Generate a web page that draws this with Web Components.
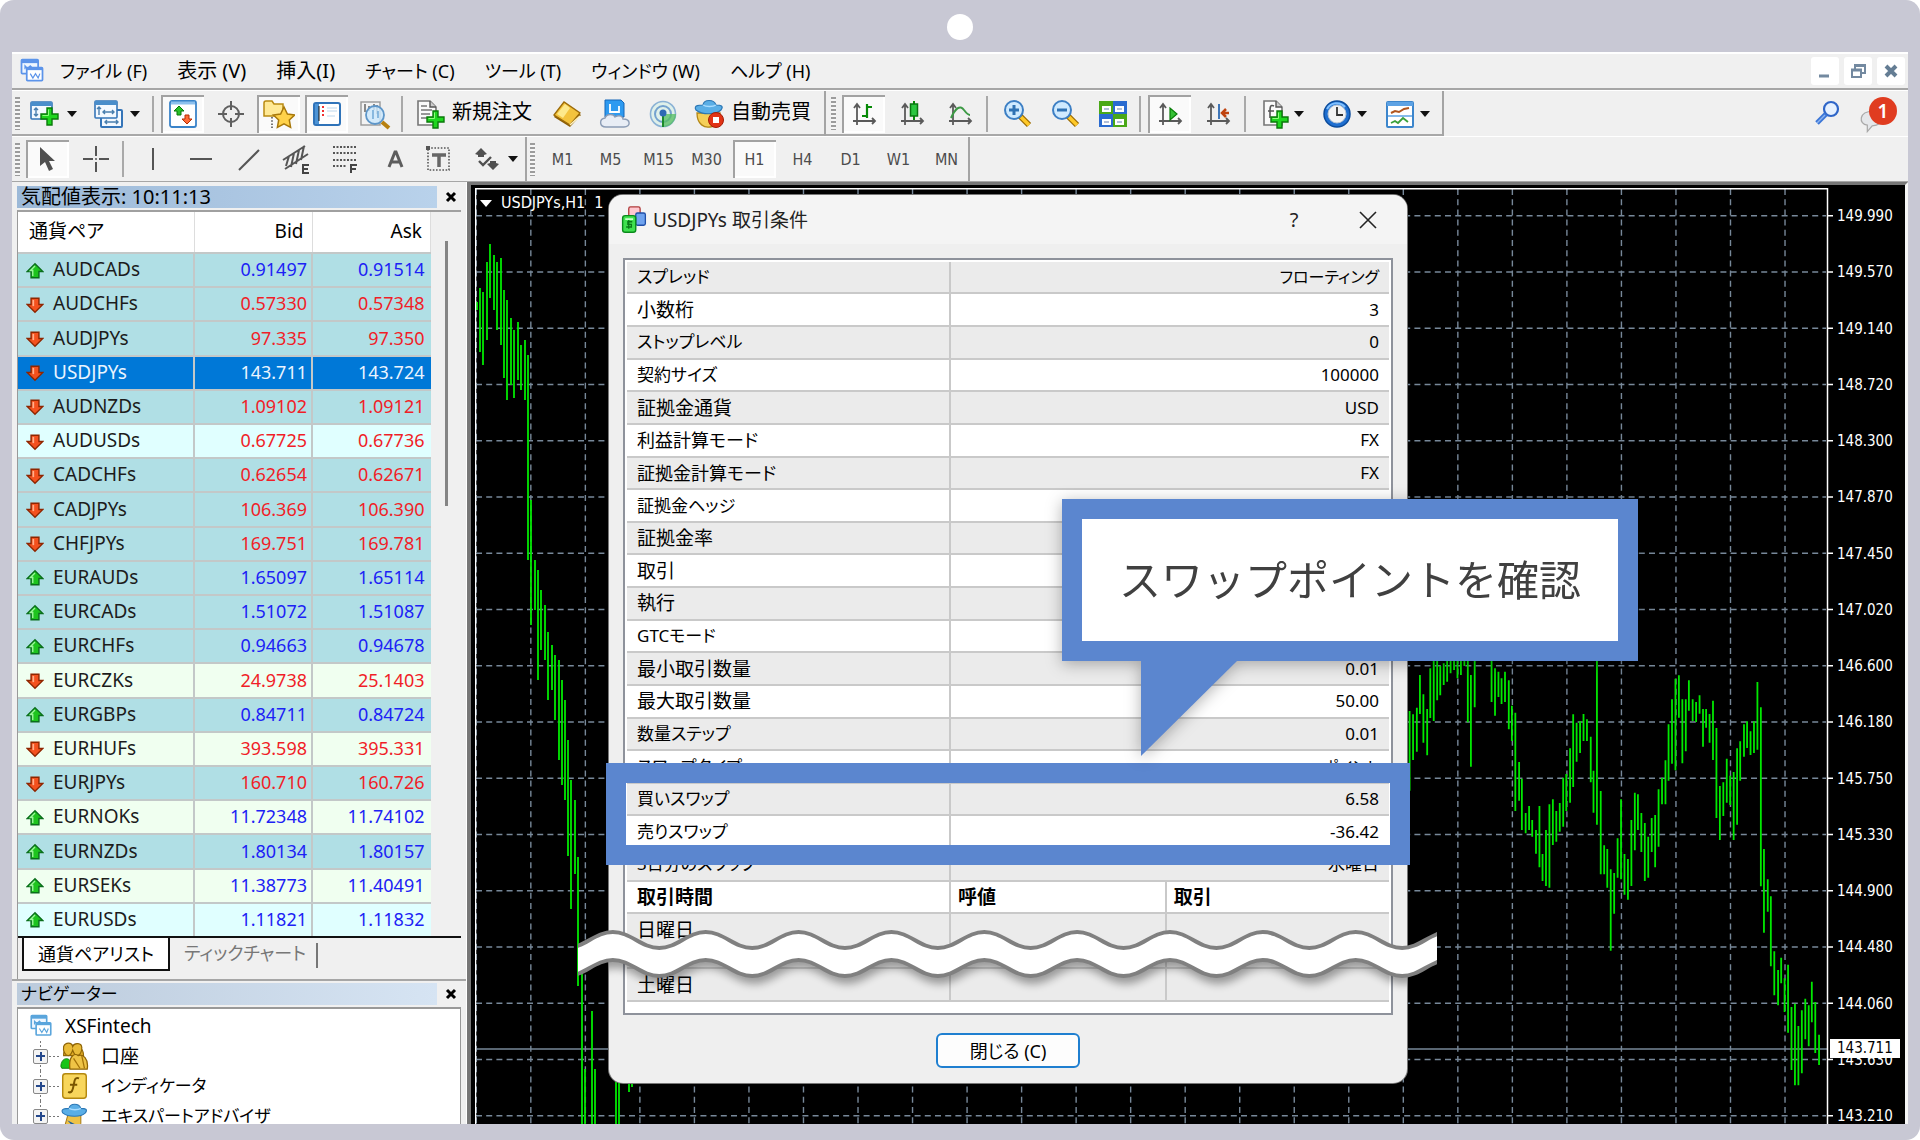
<!DOCTYPE html>
<html lang="ja">
<head>
<meta charset="utf-8">
<title>USDJPYs 取引条件</title>
<style>
  html, body { margin: 0; height: 100%; background: #fff; }
  body { font-family: "Noto Sans", "Noto Sans CJK JP", sans-serif; font-size: 18px; color: #000; font-feature-settings: "palt"; overflow: hidden; }
</style>
</head>
<body>
<terminal-frame>
  <menu-bar slot="menu"></menu-bar>
  <tool-bar slot="bars">
    <tool-group>
      <tool-button icon="newchart" label="新規チャート" split></tool-button>
      <tool-button icon="profiles" label="チャートの組表示" split></tool-button>
      <tool-sep></tool-sep>
      <tool-button icon="watch" label="気配値表示" pressed></tool-button>
      <tool-button icon="target" label="データウィンドウ"></tool-button>
      <tool-button icon="favorites" label="ナビゲーター" pressed></tool-button>
      <tool-button icon="terminal" label="ターミナル" pressed></tool-button>
      <tool-button icon="tester" label="ストラテジーテスター"></tool-button>
      <tool-sep></tool-sep>
      <tool-button icon="order">新規注文</tool-button>
      <tool-button icon="book" label="メタエディター"></tool-button>
      <tool-button icon="cloud" label="クラウド"></tool-button>
      <tool-button icon="signal" label="シグナル"></tool-button>
      <tool-button icon="auto">自動売買</tool-button>
    </tool-group>
    <tool-group inset>
      <tool-button icon="bars" label="バーチャート" pressed></tool-button>
      <tool-button icon="candle" label="ローソク足"></tool-button>
      <tool-button icon="line" label="ラインチャート"></tool-button>
      <tool-sep></tool-sep>
      <tool-button icon="zoomin" label="拡大"></tool-button>
      <tool-button icon="zoomout" label="縮小"></tool-button>
      <tool-button icon="tile" label="整列"></tool-button>
      <tool-sep></tool-sep>
      <tool-button icon="scroll" label="自動スクロール" pressed></tool-button>
      <tool-button icon="shift" label="チャートシフト"></tool-button>
      <tool-sep></tool-sep>
      <tool-button icon="indicator" label="インディケータ" split></tool-button>
      <tool-button icon="clock" label="時間足" split></tool-button>
      <tool-button icon="template" label="定型チャート" split></tool-button>
    </tool-group>
    <alert-tools slot="end"></alert-tools>
  </tool-bar>
  <tool-bar slot="bars" last>
    <tool-group flat>
      <tool-button icon="cursor" label="カーソル" pressed></tool-button>
      <tool-button icon="cross" label="クロスヘア"></tool-button>
      <tool-sep></tool-sep>
      <tool-button icon="vline" label="垂直線"></tool-button>
      <tool-button icon="hline" label="水平線"></tool-button>
      <tool-button icon="trend" label="トレンドライン"></tool-button>
      <tool-button icon="channel" label="チャネル"></tool-button>
      <tool-button icon="fibo" label="フィボナッチ"></tool-button>
      <tool-button icon="texta" label="テキスト"></tool-button>
      <tool-button icon="textt" label="ラベル"></tool-button>
      <tool-button icon="arrows" label="矢印" split></tool-button>
    </tool-group>
    <tool-group flat>
      <tool-button period>M1</tool-button>
      <tool-button period>M5</tool-button>
      <tool-button period>M15</tool-button>
      <tool-button period>M30</tool-button>
      <tool-button period pressed>H1</tool-button>
      <tool-button period>H4</tool-button>
      <tool-button period>D1</tool-button>
      <tool-button period>W1</tool-button>
      <tool-button period>MN</tool-button>
    </tool-group>
  </tool-bar>
  <market-watch slot="side"></market-watch>
  <navigator-panel slot="side"></navigator-panel>
  <price-chart slot="main"></price-chart>
  <terms-dialog slot="over"></terms-dialog>
  <call-out slot="over">スワップポイントを確認</call-out>
</terminal-frame>

<script>
const define = (name, css, html) => {
  const t = document.createElement('template');
  t.innerHTML = `<style>:host,*{box-sizing:border-box}button{font:inherit;color:inherit;background:none;border:0;padding:0;margin:0;font-feature-settings:inherit}svg{display:block}${css}</style>`;
  customElements.define(name, class extends HTMLElement {
    connectedCallback() {
      if (this.shadowRoot) return;
      const root = this.attachShadow({ mode: 'open' });
      root.append(t.content.cloneNode(true));
      const body = document.createElement('template');
      body.innerHTML = typeof html === 'function' ? html(this) : html;
      root.append(body.content);
    }
  });
};

/* ---------- icons, all on a 32 x 32 grid ---------- */
const plus = (x, y) => `<path transform="translate(${x} ${y})" d="M7 1h5v6h6v5h-6v6H7v-6H1V7h6z" fill="#1ed61e" stroke="#0a7a0a" stroke-width="1.4"/><path transform="translate(${x} ${y})" d="M8.5 2.5v6H2.5" fill="none" stroke="#8dff7d"/>`;
const axes = `<path d="M9 7v20M5 23h22M6 10l3-4 3 4M24 20l3 3-3 3" fill="none" stroke="#5a5a5a" stroke-width="1.8"/>`;
const lens = `<path d="M19 18l9 9" stroke="#9a6a00" stroke-width="6"/><path d="M20 19l8 8" stroke="#ffc928" stroke-width="3.5"/><circle cx="13" cy="12" r="9" fill="#cfeaff" stroke="#3d7fc4" stroke-width="2"/>`;
const sheet = `<path d="M4 3h12l6 6v18H4z" fill="#fafafa" stroke="#777" stroke-width="1.6"/><path d="M16 3v6h6" fill="#ccc" stroke="#555" stroke-width="1.4"/>`;
const hat = `<path d="M3 12c-3-5 4-5 7-5 1-6 11-6 13 0 5 0 8 1 5 5-5 5-19 5-25 0z" fill="#5aaee6" stroke="#2b77b5" stroke-width="1.2"/><path d="M10 7c3 2 10 2 13 0" fill="none" stroke="#a8dcff" stroke-width="1.5"/>`;
const windows = c => `<rect x="4" y="3" width="19" height="16" rx="1" fill="#eef6ff" stroke="${c}" stroke-width="2"/><rect x="4" y="3" width="19" height="4" fill="${c}"/><path d="M8 14v-4l3 3 3-3 3 3" fill="none" stroke="${c}" stroke-width="1.4"/><rect x="10" y="12" width="18" height="15" rx="1" fill="#fff" stroke="${c}" stroke-width="2"/><rect x="10" y="12" width="18" height="3" fill="${c}"/><path d="M14 19l3 5 3-5 3 5 2-5" fill="none" stroke="${c}" stroke-width="1.4"/>`;
const ICONS = {
  app: windows('#5c94ea'),
  account: windows('#5aa5dc'),
  newchart: `<rect x="1" y="4" width="21" height="17" rx="1" fill="#f4f9ff" stroke="#3575b8" stroke-width="1.6"/><rect x="1" y="4" width="21" height="4" fill="#4a8ecb"/><path d="M6 10v8M4 12l2-2 2 2M4 16l2 2 2-2" fill="none" stroke="#4a7fae" stroke-width="1.4"/>${plus(10, 9)}`,
  profiles: `<rect x="8" y="12" width="21" height="17" rx="1" fill="#f4f9ff" stroke="#3575b8" stroke-width="2"/><path d="M12 24h13M14 22l-2 2 2 2M23 22l2 2-2 2" fill="none" stroke="#4a7fae" stroke-width="1.4"/><rect x="2" y="3" width="22" height="17" rx="1" fill="#f4f9ff" stroke="#3575b8" stroke-width="1.6"/><rect x="2" y="3" width="22" height="4" fill="#4a8ecb"/><path d="M6 9v8M4 11l2-2 2 2M10 14h11M12 12l-2 2 2 2M19 12l2 2-2 2" fill="none" stroke="#4a7fae" stroke-width="1.4"/>`,
  watch: `<rect x="3" y="3" width="26" height="26" rx="2" fill="#fff" stroke="#3983c9" stroke-width="1.8"/><path d="M4 5h24" stroke="#8cc0ee" stroke-width="3"/><path d="M12 8l5 5h-3v4h-4v-4H7z" fill="#28bf28" stroke="#077807"/><path d="M20 26l-5-5h3v-4h4v4h3z" fill="#ff6a35" stroke="#b62d00"/>`,
  target: `<circle cx="16" cy="16" r="8" fill="none" stroke="#606060" stroke-width="2"/><path d="M16 3v9M16 20v9M3 16h9M20 16h9" stroke="#606060" stroke-width="2"/>`,
  favorites: `<path d="M1 18V5q0-2 2-2h6l2 3h9v12z" fill="#ffe995" stroke="#b98a12" stroke-width="1.5"/><path d="M9 19v11" stroke="#555" stroke-width="1.6" stroke-dasharray="1.6 1.6"/><path d="M21 9l3.4 7 7.2 1-5.300 5 1.300 7.400-6.600-3.600-6.600 3.600 1.300-7.400-5.300-5 7.200-1z" fill="#ffd24a" stroke="#a8780a" stroke-width="1.5"/>`,
  terminal: `<rect x="3" y="5" width="26" height="22" rx="2" fill="#fff" stroke="#2f73b9" stroke-width="2"/><path d="M4 6h4v20H4z" fill="#4d94d6"/><path d="M11 9h2M11 13h2M11 17h2" stroke="#f03030" stroke-width="2"/><path d="M16 10h10M16 13h10M16 18h8" stroke="#bdd7ec"/><path d="M8 8v15" stroke="#111"/>`,
  tester: `<rect x="2" y="4" width="19" height="23" fill="#f3f3f3" stroke="#999" stroke-width="1.4"/><path d="M6 6v8M10 8v5M15 6v6M18 7v9" stroke="#666" stroke-width="1.5"/><circle cx="16" cy="17" r="9" fill="#cde8fb" fill-opacity=".85" stroke="#5d96c9" stroke-width="1.8"/><path d="M14 12v9M19 13v7" stroke="#6aa4d4" stroke-width="1.4"/><path d="M23 24l7 6" stroke="#b78010" stroke-width="4"/>`,
  order: `${sheet}<path d="M7 8h6M7 12h11M7 16h9M7 20h6" stroke="#777" stroke-width="1.4"/>${plus(12, 12)}`,
  book: `<path d="M3 19L13 5l17 12-11 12z" fill="#8a5c05"/><path d="M3 17L13 4l16 11-10 12z" fill="#f3c33d" stroke="#9c6b08" stroke-width="1.3"/><path d="M6 16l8-10 5 4-7 10z" fill="#fde98c"/><path d="M19 27l10-9" stroke="#fff4c4" stroke-width="1.6"/>`,
  cloud: `<path d="M6 2h16l3 3v14H6z" fill="#2d9af0" stroke="#1467b8"/><path d="M11 6v8h9V8" fill="none" stroke="#fff" stroke-width="1.8"/><path d="M7 29c-7 0-7-8-1-9 2-5 9-4 10-1 5-3 8 0 8 2 8 0 8 8 1 8z" fill="#e8edf5" stroke="#8b9cb5" stroke-width="1.4"/>`,
  signal: `<circle cx="16" cy="16" r="12.500" fill="#dff0ea" stroke="#8bb2d5" stroke-width="1.600"/><circle cx="16" cy="16" r="8" fill="none" stroke="#74a2cf" stroke-width="2"/><path d="M16 16h13a13 13 0 0 1-13 13z" fill="#54bd5f" fill-opacity=".75"/><path d="M16 16v13" stroke="#1b8a2a" stroke-width="2"/><circle cx="16" cy="15" r="3.500" fill="#2f69b5"/>`,
  auto: `<path d="M4 15c0 12 8 15 13 14 9-1 10-8 10-14z" fill="#f5cf58" stroke="#b28614" stroke-width="1.300"/>${hat}<circle cx="23" cy="22" r="7.500" fill="#e23315" stroke="#a51c05"/><rect x="20" y="19" width="6" height="6" fill="#fff"/>`,
  bars: `${axes}<path d="M19 6v14M19 9h5M14 18h5" fill="none" stroke="#078a07" stroke-width="2.200"/>`,
  candle: `${axes}<path d="M18 3v19" stroke="#078a07" stroke-width="2"/><rect x="14.500" y="6" width="7" height="12" fill="#2ac63f" stroke="#07760f" stroke-width="1.500"/>`,
  line: `${axes}<path d="M7 20c4-9 9-14 13-8 3 4 4 5 6 5" fill="none" stroke="#3d9a45" stroke-width="2"/>`,
  zoomin: `${lens}<path d="M8 12h10M13 7v10" stroke="#2f72b4" stroke-width="3"/>`,
  zoomout: `${lens}<path d="M8 12h10" stroke="#2f72b4" stroke-width="3"/>`,
  tile: `<rect x="2" y="3" width="14" height="13" fill="#4aa818"/><rect x="16" y="3" width="14" height="13" fill="#2a6bd0"/><rect x="2" y="16" width="14" height="13" fill="#2a6bd0"/><rect x="16" y="16" width="14" height="13" fill="#4aa818"/><path d="M5 8h9v6H5zM18 8h9v6h-9zM5 21h9v6H5zM18 21h9v6h-9z" fill="#fff"/><path d="M7 11h5M20 11h5M7 24h5M20 24h5" stroke="#9ac" stroke-width="1.500"/>`,
  scroll: `${axes}<path d="M16 10v12l7-6z" fill="#35c135" stroke="#087d08" stroke-width="1.200"/>`,
  shift: `${axes}<path d="M17 6v15" stroke="#3f76b8" stroke-width="2"/><path d="M27 15h-7M24 11l-4 4 4 4" fill="none" stroke="#c04410" stroke-width="2.500"/>`,
  indicator: `<g transform="translate(3 0)">${sheet}<path d="M14 8c-4-2-4 2-4 5v7M8 13h6" fill="none" stroke="#555" stroke-width="1.600"/>${plus(10, 12)}</g>`,
  clock: `<circle cx="17" cy="16" r="13" fill="#1f6fd0" stroke="#0c4c9c" stroke-width="1.500"/><path d="M7 11a11 11 0 0 1 18-2" fill="none" stroke="#7fc0ff" stroke-width="2"/><circle cx="17" cy="16" r="9" fill="#f3f3f3" stroke="#b9c6d4"/><path d="M17 9v8h6" fill="none" stroke="#333" stroke-width="1.800"/>`,
  template: `<rect x="4" y="4" width="26" height="25" rx="1" fill="#fff" stroke="#3d86cc" stroke-width="2"/><path d="M4 6h26" stroke="#5da2e4" stroke-width="4"/><path d="M5 18h24" stroke="#5da2e4" stroke-width="1.500"/><path d="M8 15l4-2 4 1 5-3 5-1" fill="none" stroke="#b0551e" stroke-width="2"/><path d="M8 25l4-2 3 2 5-5 5 4" fill="none" stroke="#3aa03a" stroke-width="1.800"/>`,
  cursor: `<path d="M8 4v19l5-4 4 9 4-2-4-8h6z" fill="#505050"/>`,
  cross: `<path d="M16 3v10M16 19v10M3 16h10M19 16h10" stroke="#555" stroke-width="2"/><circle cx="16" cy="16" r="1" fill="#555"/>`,
  vline: `<path d="M16 5v22" stroke="#555" stroke-width="2"/>`,
  hline: `<path d="M5 16h22" stroke="#555" stroke-width="2"/>`,
  trend: `<path d="M6 27L26 7" stroke="#555" stroke-width="2"/>`,
  channel: `<path d="M2 17L24 3M4 26L27 11M8 13l-3 10M13 10l-3 14M18 7l-3 14M23 3l-3 14" fill="none" stroke="#555" stroke-width="2"/><path d="M28 22h-6v8h6M22 26h5" fill="none" stroke="#444" stroke-width="2"/>`,
  fibo: `<path d="M4 4h23M4 10h23M4 17h23M4 23h14" stroke="#555" stroke-width="2" stroke-dasharray="2 1.500"/><path d="M28 22h-6v8M22 26h5" fill="none" stroke="#444" stroke-width="2"/>`,
  texta: `<path d="M12 24l6-15h1l6 15M14 19h9" fill="none" stroke="#5d5d5d" stroke-width="3"/>`,
  textt: `<rect x="3" y="5" width="21" height="22" fill="none" stroke="#555" stroke-width="1.600" stroke-dasharray="1.600 1.600"/><rect x="1" y="3" width="4" height="4" fill="#555"/><path d="M7 12h14M14 12v12" stroke="#666" stroke-width="3.500"/>`,
  arrows: `<path d="M4 11l6-6 6 6-3 1v2H7v-2z M16 21l3-1v-2h6v2l3 1-6 6z" fill="#505050"/><path d="M8 18l4 4 8-8" fill="none" stroke="#505050" stroke-width="2.400"/>`,
  search: `<circle cx="21" cy="11" r="7" fill="#e6f1ff" stroke="#2f66c8" stroke-width="2.200"/><path d="M16 16l-9 9" stroke="#3c76d6" stroke-width="5"/><path d="M15 17l-8 8" stroke="#8bb4f0" stroke-width="1.500"/>`,
  bubble: `<path d="M16 4c-18 0-18 16-7 17v8l6-7c16 0 16-18 1-18z" fill="#e5e7ea" stroke="#a9a9a9" stroke-width="1.500"/>`,
  up: `<path d="M16 3l14 14h-7v11H9V17H2z" fill="#1ec41e" stroke="#0a6e1c" stroke-width="2.500"/><path d="M16 7l-8 8h4v10" fill="none" stroke="#9bf59b" stroke-width="2.500"/>`,
  down: `<path d="M16 29l14-14h-7V4H9v11H2z" fill="#f4511e" stroke="#8f2600" stroke-width="2.500"/><path d="M13 7v11" stroke="#ffb08c" stroke-width="3"/>`,
  people: `<path d="M1 27c0-10 10-12 12-2v4H2z" fill="#19c519" stroke="#0a7d0a"/><path d="M4 15c-1-15 22-16 22 0z" fill="#e0ab25" stroke="#916708" stroke-width="1.300"/><path d="M4 5c2-5 9-5 10 0 2-5 10-4 10 1 1 5-3 9-5 9-2 0-4-3-5-6-1 3-3 6-5 6-3 0-6-5-5-10z" fill="#e9bb38" stroke="#8f6405" stroke-width="1.300"/><path d="M11 30c-2-16 6-18 9-15 5-2 12 3 10 15z" fill="#efc446" stroke="#8f6405" stroke-width="1.400"/><path d="M15 18l7 11M24 15l3 14" stroke="#a57308" stroke-width="1.400"/>`,
  func: `<rect x="3" y="2" width="26" height="27" rx="3" fill="#f8d65c" stroke="#b4880f" stroke-width="1.600"/><path d="M21 7c-5-2-5 3-6 8s-2 9-6 7M11 14h8" fill="none" stroke="#7a5600" stroke-width="2.200"/>`,
  expert: `<path d="M9 13h14v11l7 7H4z" fill="#eec247" stroke="#9a6c08"/><path d="M8 20l9 10h10z" fill="#1c5e9e"/>${hat}`,
  money: `<rect x="10" y="1" width="13" height="14" rx="2" fill="#ffc8d0" stroke="#b03a3a" stroke-width="1.500"/><rect x="18" y="8" width="11" height="14" rx="2" fill="#6fa3ef" stroke="#1f4fa8" stroke-width="1.500"/><rect x="3" y="11" width="15" height="19" rx="3" fill="#3fe04f" stroke="#0a8a1b" stroke-width="1.600"/><path d="M6 15h9" stroke="#c8ffc8" stroke-width="2"/><path d="M14 18h-5v3h4v3H7M10 16v10" fill="none" stroke="#0a7a18" stroke-width="1.500"/>`
};
define('ui-icon', `:host{display:block;width:32px;height:32px;flex:none}svg{width:100%;height:100%}`,
  el => `<svg viewBox="0 0 32 32" aria-hidden="true">${ICONS[el.getAttribute('name')]}</svg>`);

/* ---------- outer frame ---------- */
define('terminal-frame', `
  :host{display:flex;flex-direction:column;height:100vh;background:#c8c8d4;border-radius:14px;padding:0 12px 16px;position:relative;overflow:hidden}
  .cam{height:52px;flex:none;display:flex;justify-content:center}
  .cam i{width:26px;height:26px;border-radius:50%;background:#fff;margin-top:14px}
  .win{flex:1;min-height:0;background:#f0f0f0;display:flex;flex-direction:column;border-top:2px solid #fff}
  .work{flex:1;min-height:0;display:flex}
  .side{width:455px;flex:none;display:flex;flex-direction:column;min-height:0;overflow:hidden;border-right:1px solid #fff}
  .main{flex:1;min-width:0;display:flex}`,
  `<div class="cam"><i></i></div>
   <div class="win"><slot name="menu"></slot><slot name="bars"></slot>
   <div class="work"><div class="side"><slot name="side"></slot></div><div class="main"><slot name="main"></slot></div></div></div>
   <slot name="over"></slot>`);

define('menu-bar', `
  :host{display:flex;align-items:center;height:36px;flex:none;padding:0 3px 0 6px;border-bottom:2px solid #a6a6a6}
  ui-icon{width:28px;height:28px}
  nav{display:flex;gap:30px;margin-left:14px;font-size:18px;line-height:28px;height:30px}
  .k{font-size:20px}
  .mdi{margin-left:auto;display:flex;gap:5px}
  .mdi button{width:28px;height:28px;background:#fff;border-radius:3px;display:grid;place-items:center}
  svg{width:16px;height:16px}`,
  `<ui-icon name="app"></ui-icon>
   <nav>${['ファイル (F)', '表示 (V)', '挿入(I)', 'チャート (C)', 'ツール (T)', 'ウィンドウ (W)', 'ヘルプ (H)'].map(m => `<button${/^[表挿]/.test(m) ? ' class="k"' : ''}>${m}</button>`).join('')}</nav>
   <div class="mdi">
    <button aria-label="最小化"><svg viewBox="0 0 16 16"><path d="M2 13h10" stroke="#7389a0" stroke-width="3"/></svg></button>
    <button aria-label="元に戻す"><svg viewBox="0 0 16 16"><path d="M5 2h10v8h-3M5 3h10M5 1v5" fill="none" stroke="#7389a0" stroke-width="2"/><rect x="2" y="7" width="9" height="7" fill="#fff" stroke="#7389a0" stroke-width="2"/><path d="M1 7h11" stroke="#7389a0" stroke-width="3"/></svg></button>
    <button aria-label="閉じる"><svg viewBox="0 0 16 16"><path d="M3 3l10 10M13 3L3 13" stroke="#647d94" stroke-width="4"/></svg></button>
   </div>`);

/* ---------- toolbars ---------- */
define('tool-bar', `:host{display:flex;height:46px;flex:none;border-top:1px solid #fff}:host([last]){border-bottom:1px solid #a6a6a6}.end{margin-left:auto;display:flex}`,
  `<slot></slot><div class="end"><slot name="end"></slot></div>`);
define('tool-group', `
  :host{display:flex;align-items:center;gap:5px;border-right:2px solid #a4a4a4;padding:0 5px 0 3px;box-shadow:inset 0 -2px #a8a8a8}
  :host([flat]){box-shadow:none;padding-right:0}
  :host([inset]){padding-left:5px}
  i{width:5px;height:33px;margin-right:1px;background:repeating-linear-gradient(#9c9c9c 0 2px,#f6f6f6 2px 4px)}`,
  `<i></i><slot></slot>`);
define('tool-sep', `:host{display:block;width:2px;height:36px;background:#a9a9a9;margin-right:2px}`, '');
define('tool-button', `
  :host{display:block;height:38px}
  button{width:43px;height:38px;display:flex;align-items:center;justify-content:center}
  :host([split]) button{width:58px;gap:5px;justify-content:flex-start;padding-left:4px}
  .txt{width:130px;justify-content:flex-start;padding-left:4px;gap:6px;font-size:20px;line-height:28px}
  .txt span{padding-bottom:4px}
  .txt slot{display:block;white-space:nowrap}
  :host([pressed]) button{background:#fafafa;box-shadow:inset 2px 2px #a2a2a2,inset -2px -2px #fff}
  :host([period]) button{font-family:"DejaVu Sans Condensed","DejaVu Sans",sans-serif;font-size:16px;color:#4c4c4c}
  b{border:5px solid transparent;border-top:6px solid #111;border-bottom:0}`,
  el => {
    const icon = el.getAttribute('icon'), label = el.getAttribute('label');
    return `<button${label ? ` aria-label="${label}"` : icon ? ' class="txt"' : ''}>${icon ? `<ui-icon name="${icon}"></ui-icon>` : ''}${el.hasAttribute('split') ? '<b></b>' : ''}${label ? '' : '<span><slot></slot></span>'}</button>`;
  });
define('alert-tools', `
  :host{display:flex;align-items:center;gap:18px;padding-right:16px}
  button{position:relative;width:32px;height:32px;display:flex;align-items:flex-start}
  .msg ui-icon{width:26px;height:26px;margin-top:10px}
  .badge{position:absolute;left:9px;top:-1px;width:28px;height:28px;border-radius:50%;background:#e03c20;color:#fff;font-size:19px;font-weight:600;line-height:28px;text-align:center}`,
  `<button aria-label="検索"><ui-icon name="search"></ui-icon></button>
   <button class="msg"><ui-icon name="bubble"></ui-icon><span class="badge">1</span></button>`);

/* ---------- side panels ---------- */
define('panel-title', `
  :host{display:flex;align-items:center;height:22px;margin:0 0 2px 5px;flex:none}
  .t{width:420px;height:22px;line-height:22px;padding-left:4px;background:linear-gradient(90deg,var(--from),var(--to));font-size:var(--size);white-space:nowrap;overflow:hidden}
  button{width:28px;height:22px;display:grid;place-items:center}`,
  `<div class="t"><slot></slot></div><button aria-label="閉じる"><svg width="12" height="12" viewBox="0 0 12 12"><path d="M2 2l8 8M10 2l-8 8" stroke="#000" stroke-width="3"/></svg></button>`);

const PAIRS = `AUDCADs u 0.91497 0.91514 p|AUDCHFs d 0.57330 0.57348 p|AUDJPYs d 97.335 97.350 p|USDJPYs d 143.711 143.724 s|AUDNZDs d 1.09102 1.09121 p|AUDUSDs d 0.67725 0.67736 c|CADCHFs d 0.62654 0.62671 p|CADJPYs d 106.369 106.390 p|CHFJPYs d 169.751 169.781 p|EURAUDs u 1.65097 1.65114 p|EURCADs u 1.51072 1.51087 p|EURCHFs u 0.94663 0.94678 p|EURCZKs d 24.9738 25.1403 h|EURGBPs u 0.84711 0.84724 p|EURHUFs d 393.598 395.331 h|EURJPYs d 160.710 160.726 p|EURNOKs u 11.72348 11.74102 h|EURNZDs u 1.80134 1.80157 p|EURSEKs u 11.38773 11.40491 h|EURUSDs u 1.11821 1.11832 c`.split('|').map(r => r.split(' '));
define('market-watch', `
  :host{display:flex;flex-direction:column;height:797px;flex:none;padding-top:4px}
  panel-title{--from:#9cb9d8;--to:#b9d2eb;--size:20px}
  .body{flex:1;margin:0 5px;border-left:1px solid #999;border-top:2px solid #a0a0a0;display:flex;flex-direction:column;min-height:0}
  .list{display:flex;height:724px;flex:none}
  table{width:413px;height:724px;border-collapse:collapse;table-layout:fixed;flex:none}
  th{font-weight:400;font-size:19px;line-height:26px;text-align:right;padding:0 8px 2px 0;background:#fff;border-right:1px solid #ddd;height:41px}
  th:first-child{text-align:left;padding-left:11px;width:176px}
  th:nth-child(2){width:118px}
  td{padding:0 4px 2px 0;border-top:2px solid #c3c8c8;border-right:2px solid #c3c8c8;text-align:right;font-size:18px;line-height:26px}
  td:last-child{border-right:0;padding-right:6px}
  .u td{color:#1c22f5}.d td{color:#f01e28}
  tr td:first-child{text-align:left;font-size:19px;color:#1c1c1c;padding-left:8px}
  .n{display:flex;align-items:center;gap:9px}.n ui-icon{width:18px;height:18px;margin-top:3px}
  .p{background:#b0dfe5}.c{background:#e0ffff}.h{background:#f0fff0}
  .s{background:#0078d7}tr.s td,tr.s td:first-child{color:#eaf4ff}
  .scroll{flex:1;display:flex;padding:29px 0 0 14px}.scroll i{width:3px;height:265px;background:#858585}
  .tabs{border-top:2px solid #111;display:flex;align-items:flex-start;padding-left:4px}
  .tabs button{height:33px;width:148px;font-size:18px;line-height:28px;white-space:nowrap}
  .tabs .on{background:#fff;border:2px solid #111;border-top:0}
  .tabs button+button{color:#777;height:30px;padding-left:4px;border-right:2px solid #777;border-image:linear-gradient(transparent 20%,#777 20%) 1}`,
  `<panel-title>気配値表示: 10:11:13</panel-title>
   <div class="body"><div class="list"><table><thead><tr><th>通貨ペア</th><th>Bid</th><th>Ask</th></tr></thead><tbody>
   ${PAIRS.map(([n, d, b, a, c]) => `<tr class="${d} ${c}"><td><div class="n"><ui-icon name="${d === 'u' ? 'up' : 'down'}"></ui-icon><span>${n}</span></div></td><td>${b}</td><td>${a}</td></tr>`).join('')}
   </tbody></table><div class="scroll"><i></i></div></div>
   <div class="tabs"><button class="on">通貨ペアリスト</button><button>ティックチャート</button></div></div>`);
define('navigator-panel', `
  :host{display:flex;flex-direction:column;flex:1;min-height:0;border-top:2px solid #a6a6a6;padding-top:2px}
  panel-title{--from:#bccbdc;--to:#d6e4f3;--size:17px}
  ul{list-style:none;margin:0 5px;padding:2px 0 0 10px;flex:1;min-height:0;overflow:hidden;background:#fff;border:1px solid #999;border-top:2px solid #999;border-bottom:0}
  li{height:30px;display:flex;align-items:center;font-size:19px;line-height:30px;white-space:nowrap}
  li+li{padding-left:5px}
  .kana{font-size:17px}
  li:first-child ui-icon{width:26px;height:28px;margin-right:11px}
  li+li ui-icon{width:29px;height:29px;margin:0 12px 0 0}
  .e{align-self:stretch;width:27px;flex:none;display:flex;align-items:center;background:linear-gradient(90deg,#777 50%,transparent 50%) 0 15px/4px 1px repeat-x,linear-gradient(#777 50%,transparent 50%) 7px 0/1px 4px repeat-y}
  .e i{width:15px;height:15px;border:1px solid #888;border-radius:2px;background:linear-gradient(#25488c,#25488c) center/9px 2px no-repeat,linear-gradient(#25488c,#25488c) center/2px 9px no-repeat,#f4f4f4}`,
  `<panel-title>ナビゲーター</panel-title>
   <ul><li><ui-icon name="account"></ui-icon>XSFintech</li>
   <li><span class="e"><i></i></span><ui-icon name="people"></ui-icon>口座</li>
   <li class="kana"><span class="e"><i></i></span><ui-icon name="func"></ui-icon>インディケータ</li>
   <li class="kana"><span class="e"><i></i></span><ui-icon name="expert"></ui-icon>エキスパートアドバイザ</li></ul>`);

/* ---------- chart ---------- */
const LEFT = '477:302-310 480:288-352 483:292-365 487:262-340 490:244-298 494:255-310 497:262-330 501:258-345 504:290-378 507:300-400 511:318-385 514:330-398 518:322-380 521:345-390 525:340-400 528:355-560 531:500-625 535:560-610 538:570-680 541:590-650 545:605-660 548:632-700 552:645-690 555:655-720 559:660-760 562:680-785 565:700-800 568:740-856 571:780-909 575:800-874 578:857-986 582:974-1124 585:1069-1124 592:1011-1124 595:1069-1124 616:1070-1124 619:1070-1124 629:1070-1092 632:1070-1087';
const RIGHT = '86:213-452 96:223-360 107:203-335 116:105-222 126:163-308 137:207-346 146:85-234 156:50-243 166:50-181 175:78-166 185:70-135 195:50-125 205:50-100 215:50-90 225:50-115 235:50-105 245:50-78 255:50-247 264:105-380 275:50-202 324:50-186 334:85-227 344:95-171 353:115-192 363:95-186 374:121-268 383:197-303 393:218-513 404:366-482 412:416-570 423:519-580 433:498-570 442:540-590 453:570-641 463:498-682 472:642-723 482:570-738 492:493-743 502:478-615 512:513-605 522:489-575 532:413-560 541:402-513 552:325-488 561:223-441 571:248-365 581:244-339 591:222-303 601:238-303 612:290-427 620:392-518 630:50-554 641:453-703 651:616-703 660:627-743 670:688-932 680:699-821 690:595-713 700:478-718 710:642-764 720:657-779 730:540-738 740:458-631 749:463-570 759:519-636 769:549-723 779:590-713 789:534-636 799:525-682 809:448-620 819:413-493 829:361-493 838:253-422 848:178-371 858:116-391 868:106-233 878:178-370 888:178-334 897:121-212 908:178-243 918:186-246 928:166-221 938:207-320 947:207-263 957:222-308 967:182-360 977:264-534 987:438-600 997:427-528 1007:356-488 1017:407-495 1027:396-600 1037:325-554 1046:304-422 1057:253-350 1066:244-324 1076:274-345 1086:244-339 1096:126-329 1106:202-739 1115:627-878 1126:718-815 1135:769-979 1145:934-1066 1156:990-1096 1165:953-1030 1175:1015-1116 1185:974-1178 1195:1101-1290 1205:1091-1336 1215:1158-1336 1225:1111-1300 1235:1076-1198 1245:1096-1219 1254:1025-1147 1264:1086-1239 1275:1184-1275';
const parse = s => s.split(' ').map(b => b.split(/[:-]/).map(Number));
const BARS = [...parse(LEFT), ...parse(RIGHT).map(([x, a, b]) => [1380 + x / 2.904, 640 + a / 3, 640 + b / 3])];
const PRICES = '149.990 149.570 149.140 148.720 148.300 147.870 147.450 147.020 146.600 146.180 145.750 145.330 144.900 144.480 144.060 143.630 143.210'.split(' ');
const chartSvg = () => {
  let g = '';
  for (let i = 0; i < 17; i++) g += `M476 ${215.7 + i * 56.25}H1826`;
  for (let i = 0; i < 25; i++) g += `M${476.300 + i * 54.530} 189V1124`;
  let t = '';
  for (let i = 0; i < 17; i++) t += `M1827 ${215.7 + i * 56.25}h6`;
  return `<svg viewBox="475 188 1359 936" preserveAspectRatio="none" aria-hidden="true">
   <path d="${g}" stroke="#778899" stroke-width="1.400" stroke-dasharray="6 4.200" fill="none"/>
   <path d="M476 1049H1828" stroke="#778899" stroke-width="1.500"/>
   <path d="${BARS.map(([x, a, b]) => `M${x} ${a}V${b}`).join('')}" stroke="#00e800" stroke-width="1.800" fill="none"/>
   <path d="M475.500 1124V188.700H1827.500V1124${t}" stroke="#fff" stroke-width="1.500" fill="none"/></svg>`;
};
define('price-chart', `
  :host{display:flex;flex:1;background:#000;color:#fff;font-family:"DejaVu Sans Condensed","DejaVu Sans",sans-serif;border:solid #777;border-width:3px 3px 0 4px;border-right-color:#f6f6f6;padding:3px 0 0 4px;min-width:0;position:relative}
  svg{flex:1;min-width:0;width:0;height:100%}
  .t{position:absolute;left:9px;top:7px;font-size:16px;line-height:22px;display:flex;align-items:center;gap:9px;white-space:pre}
  .t b{border:6px solid transparent;border-top:7px solid #fff;border-bottom:0}
  .ax{width:71px;flex:none;display:flex;flex-direction:column;justify-content:space-between;padding-top:18px;margin-bottom:-2px;font-size:15px;line-height:20px;padding-left:3px}
  .now{position:absolute;right:5px;bottom:66px;width:70px;height:19px;line-height:19px;background:#fff;color:#000;font-size:15px;padding-left:7px}`,
  `${chartSvg()}<div class="t"><b></b><span>USDJPYs,H1  1</span></div>
   <div class="ax">${PRICES.map(p => `<span>${p}</span>`).join('')}</div><div class="now">143.711</div>`);

/* ---------- dialog ---------- */
const TERMS = 'スプレッド|フローティング,小数桁|3,ストップレベル|0,契約サイズ|100000,証拠金通貨|USD,利益計算モード|FX,証拠金計算モード|FX,証拠金ヘッジ|,証拠金率|,取引|,執行|,GTCモード|,最小取引数量|0.01,最大取引数量|50.00,数量ステップ|0.01,スワップタイプ|ポイント,買いスワップ|6.58,売りスワップ|-36.42,3日分のスワップ|水曜日'.split(',').map(r => r.split('|'));
const tone = s => {
  const kana = (s.match(/[ぁ-ヿ]/g) || []).length / s.length;
  return kana === 0 ? 'kj' : kana > 0.45 ? 'kn' : '';
};
const wavePath = (() => {
  const step = 46.430, pts = [[519.970, 0]];
  while (pts[pts.length - 1][0] < 1490) pts.push([pts[pts.length - 1][0] + step, pts.length % 2 ? 16 : 0]);
  const curve = (list, y, dir) => list.slice(1).map(([x, v], i) => `C${list[i][0] + 18 * dir} ${list[i][1] + y} ${x - 18 * dir} ${v + y} ${x} ${v + y}`).join('');
  const top = `M${pts[0][0]} 932${curve(pts, 932, 1)}`, bot = `M${pts[0][0]} 960${curve(pts, 960, 1)}`;
  const rev = [...pts].reverse();
  return { top, bot, fill: `${top}L${rev[0][0]} ${rev[0][1] + 960}${curve(rev, 960, -1)}Z` };
})();
define('terms-dialog', `
  :host{display:flex;flex-direction:column;position:absolute;left:609px;top:195px;width:798px;height:888px;background:#efefef;border-radius:14px;box-shadow:0 0 0 1px #777}
  header{height:49px;flex:none;display:flex;align-items:center;background:#f4f4f4;border-radius:14px 14px 0 0;padding:0 22px 0 11px;font-size:19px;line-height:28px;color:#222}
  header ui-icon{width:28px;height:28px;margin-right:5px}
  header button{width:34px;height:34px;display:grid;place-items:center;font-size:20px}
  header button:first-of-type{margin-left:auto;margin-right:40px}
  .box{margin:14px 14px 0;height:757px;flex:none;background:#fff;border:2px solid #8e929b;padding:2px}
  table{width:100%;border-collapse:collapse;table-layout:fixed;height:740px}
  td,th{border-bottom:2px solid #c9c9c9;border-right:2px solid #c9c9c9;padding:0 10px;text-align:left;font-size:18px;font-weight:400;line-height:26px;white-space:nowrap}
  td:last-child{border-right:0}
  .kj{font-size:19px}.kn{font-size:17px}
  .r{text-align:right;font-size:17px}
  .r.kn{font-size:16px}
  .g{background:#ebebeb}
  .h{font-weight:700;padding-left:7px;font-size:19px}th.h{padding-left:10px}
  .tall>*{height:55px;vertical-align:top;padding-top:3px}
  footer{flex:1;display:grid;place-items:start center;padding-top:18px}
  footer button{width:144px;height:35px;border:2px solid #1f7fd0;border-radius:6px;background:#fdfdfd;font-size:18px;line-height:28px}
  .mark{position:absolute;left:-3px;top:568px;right:-3px;height:102px;border:20px solid #5b86cf;z-index:1}
  .wave{position:absolute;left:-31px;top:725px;width:859px;height:80px}`,
  `<header><ui-icon name="money"></ui-icon>USDJPYs 取引条件<button aria-label="ヘルプ">?</button><button aria-label="閉じる"><svg width="18" height="18" viewBox="0 0 18 18"><path d="M1 1l16 16M17 1L1 17" stroke="#222" stroke-width="1.600"/></svg></button></header>
   <div class="box"><table><colgroup><col style="width:42.400%"><col style="width:28.300%"><col></colgroup><tbody>
   ${TERMS.map(([a, b], i) => `<tr class="${i % 2 ? '' : 'g'}"><th scope="row" class="${tone(a)}">${a}</th><td class="r ${b && /[ァ-ヿ]/.test(b) ? 'kn' : ''}" colspan="2">${b}</td></tr>`).join('')}
   <tr><th class="h">取引時間</th><td class="h">呼値</td><td class="h">取引</td></tr>
   <tr class="g tall"><th class="kj">日曜日</th><td></td><td></td></tr>
   <tr class="g"><th class="kj">土曜日</th><td></td><td></td></tr></tbody></table></div>
   <footer><button>閉じる (C)</button></footer>
   <div class="mark"></div>
   <svg class="wave" viewBox="578 920 859 80" aria-hidden="true"><defs><filter id="f" x="-5%" y="-50%" width="110%" height="200%"><feGaussianBlur stdDeviation="4"/></filter><clipPath id="c"><rect x="609" y="920" width="798" height="80"/></clipPath></defs>
   <g clip-path="url(#c)"><path d="${wavePath.fill}" fill="#000" opacity=".35" filter="url(#f)" transform="translate(2 8)"/></g>
   <path d="${wavePath.fill}" fill="#fff"/><path d="${wavePath.top}" fill="none" stroke="#808080" stroke-width="4"/><path d="${wavePath.bot}" fill="none" stroke="#808080" stroke-width="4"/></svg>`);
define('call-out', `
  :host{display:block;position:absolute;left:1062px;top:499px;width:576px;z-index:2;filter:drop-shadow(0 3px 8px rgba(0,0,0,.3));font-feature-settings:normal}
  .b{height:162px;border:20px solid #5b86cf;background:#fff;display:grid;place-items:center;padding-bottom:4px;font-family:"Noto Sans CJK JP",sans-serif;font-weight:400;font-size:42px;line-height:60px;color:#404040;white-space:nowrap}
  svg{margin-left:79px}`,
  `<div class="b"><span><slot></slot></span></div><svg width="96" height="95" viewBox="0 0 96 95"><path d="M0 0h96L0 95z" fill="#5b86cf"/></svg>`);
</script>
</body>
</html>
